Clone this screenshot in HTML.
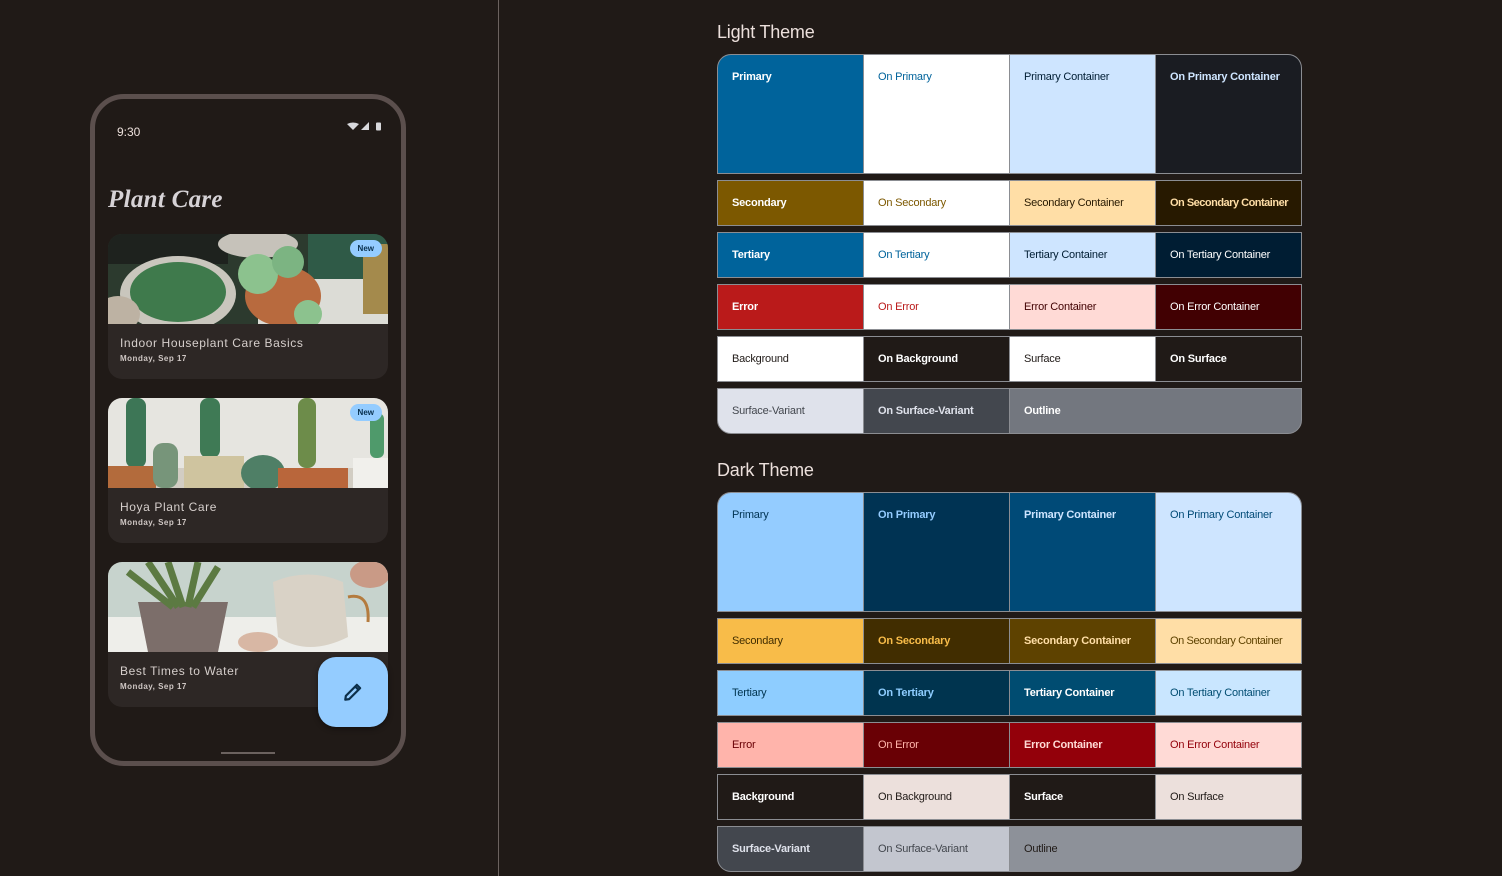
<!DOCTYPE html>
<html><head><meta charset="utf-8"><style>
*{box-sizing:border-box;margin:0;padding:0}
body{width:1502px;height:876px;background:#201a17;position:relative;overflow:hidden;font-family:"Liberation Sans",sans-serif}
.divider{position:absolute;left:498px;top:0;width:1px;height:876px;background:#6b625f}
.phone{position:absolute;left:90px;top:94px;width:316px;height:672px;border:5px solid #5b4f4d;border-radius:34px;background:#201a17}
.abs{position:absolute}
.card{position:absolute;left:13px;width:280px;height:145px;background:#2d2725;border-radius:14px;overflow:hidden}
.card .img{position:absolute;left:0;top:0;width:280px;height:90px}
.card .t{position:absolute;left:12px;top:102px;color:#d6cfcc;font-size:12px;letter-spacing:.6px}
.card .d{position:absolute;left:12px;top:120px;color:#cfc7c4;font-size:8px;font-weight:bold;letter-spacing:.5px}
.new{position:absolute;right:6px;top:6px;background:#94ccff;color:#08304d;font-size:8px;font-weight:bold;padding:4px 8px;border-radius:9px}
h2{position:absolute;left:717px;color:#ece0dc;font-size:18px;font-weight:normal;letter-spacing:-.2px}
.row{position:absolute;left:717px;width:585px;display:flex;border:1px solid #8b8d92;background:#8b8d92;gap:1px;overflow:hidden}
.row div{flex:0 0 145px;font-size:11px;padding-left:14px;display:flex;align-items:center;white-space:nowrap;letter-spacing:-.2px;overflow:hidden}
.row.big div{align-items:flex-start;padding-top:16px}
.row div.w{flex:1}
.b{font-weight:bold}
</style></head><body>
<div class="divider"></div>
<div class="phone">
  <div class="abs" style="left:22px;top:26px;color:#ece0dc;font-size:12px">9:30</div>
  <svg class="abs" style="left:252px;top:23px" width="38" height="12" viewBox="0 0 38 12">
    <path d="M0 2 Q6 -1 12 2 L6 8 Z" fill="#d8d8dc"/><path d="M14 8 L22 0 L22 8 Z" fill="#d8d8dc"/><rect x="29" y="0.5" width="5" height="8" rx="1" fill="#d8d8dc"/>
  </svg>
  <div class="abs" style="left:13px;top:87px;color:#d6d2d6;font-family:'Liberation Serif',serif;font-style:italic;font-weight:900;font-size:25px;letter-spacing:.3px">Plant Care</div>

  <div class="card" style="top:135px">
    <svg class="img" viewBox="0 0 280 90" preserveAspectRatio="none">
      <rect width="280" height="90" fill="#2c3a2e"/>
      <rect x="0" y="0" width="120" height="30" fill="#1e221e"/>
      <rect x="150" y="40" width="130" height="50" fill="#dcdcd6"/>
      <rect x="200" y="0" width="80" height="45" fill="#2f5a47"/>
      <rect x="255" y="10" width="25" height="70" fill="#a48a4c"/>
      <ellipse cx="70" cy="60" rx="58" ry="38" fill="#c9c6bd"/>
      <ellipse cx="70" cy="58" rx="48" ry="30" fill="#3f7a4c"/>
      <ellipse cx="150" cy="10" rx="40" ry="14" fill="#c6c2ba"/>
      <ellipse cx="175" cy="62" rx="38" ry="30" fill="#b86a3e"/>
      <circle cx="150" cy="40" r="20" fill="#8cc28e"/><circle cx="180" cy="28" r="16" fill="#7cb482"/><circle cx="200" cy="80" r="14" fill="#8cc28e"/>
      <ellipse cx="10" cy="80" rx="22" ry="18" fill="#bdb2a3"/>
    </svg>
    <div class="new">New</div>
    <div class="t">Indoor Houseplant Care Basics</div><div class="d">Monday, Sep 17</div>
  </div>

  <div class="card" style="top:299px">
    <svg class="img" viewBox="0 0 280 90" preserveAspectRatio="none">
      <rect width="280" height="90" fill="#e6e5e0"/>
      <rect x="0" y="70" width="280" height="20" fill="#d2cdc3"/>
      <rect x="18" y="0" width="20" height="70" rx="8" fill="#3d7656"/>
      <rect x="0" y="68" width="48" height="22" fill="#b36b3c"/>
      <rect x="45" y="45" width="25" height="45" rx="10" fill="#77957a"/>
      <rect x="92" y="0" width="20" height="60" rx="8" fill="#3f7a55"/>
      <rect x="76" y="58" width="60" height="32" fill="#cfc49f"/>
      <ellipse cx="155" cy="75" rx="22" ry="18" fill="#4f7f66"/>
      <rect x="190" y="0" width="18" height="70" rx="8" fill="#6d8c4a"/>
      <rect x="170" y="70" width="70" height="20" fill="#b9663b"/>
      <rect x="245" y="60" width="35" height="30" fill="#f1f0ec"/>
      <rect x="262" y="15" width="14" height="45" rx="6" fill="#4f9a6b"/>
    </svg>
    <div class="new">New</div>
    <div class="t">Hoya Plant Care</div><div class="d">Monday, Sep 17</div>
  </div>

  <div class="card" style="top:463px">
    <svg class="img" viewBox="0 0 280 90" preserveAspectRatio="none">
      <rect width="280" height="90" fill="#c7d3cd"/>
      <rect x="0" y="55" width="280" height="35" fill="#eeeeea"/>
      <path d="M30 40 L120 40 L110 90 L40 90 Z" fill="#7c6e6a"/>
      <path d="M40 0 L70 45 M60 0 L75 45 M90 0 L80 45 M110 5 L85 45 M20 10 L65 45" stroke="#5c7a42" stroke-width="7"/>
      <path d="M165 20 Q200 5 235 20 L240 75 Q200 95 170 75 Z" fill="#d9d2c6"/>
      <path d="M240 35 Q262 30 260 60" stroke="#b47b3e" stroke-width="3" fill="none"/>
      <ellipse cx="262" cy="12" rx="20" ry="14" fill="#c99a86"/>
      <ellipse cx="150" cy="80" rx="20" ry="10" fill="#d8b7a4"/>
    </svg>
    <div class="t">Best Times to Water</div><div class="d">Monday, Sep 17</div>
  </div>

  <div class="abs" style="left:223px;top:558px;width:70px;height:70px;background:#94ccff;border-radius:18px;box-shadow:0 2px 6px rgba(0,0,0,.4)">
    <svg class="abs" style="left:24px;top:24px" width="22" height="22" viewBox="0 0 20 20"><path d="M3 17 L3.5 13.5 L13.5 3.5 L16.5 6.5 L6.5 16.5 Z M12 5 L15 8" stroke="#0c2f4a" stroke-width="2" fill="none" stroke-linejoin="round"/></svg>
  </div>
  <div class="abs" style="left:126px;top:653px;width:54px;height:2px;background:#6b625f"></div>
</div>

<h2 style="top:22px">Light Theme</h2>
<div class="row big" style="top:54px;height:120px;border-radius:14px 14px 0 0">
  <div class="b" style="background:#00639b;color:#fff">Primary</div>
  <div style="background:#fff;color:#00639b">On Primary</div>
  <div style="background:#cee5ff;color:#001d33">Primary Container</div>
  <div class="w b" style="background:#1a1c22;color:#cee5ff">On Primary Container</div>
</div>
<div class="row" style="top:180px;height:46px">
  <div class="b" style="background:#7c5800;color:#fff">Secondary</div>
  <div style="background:#fff;color:#7c5800">On Secondary</div>
  <div style="background:#ffdea6;color:#271900">Secondary Container</div>
  <div class="w b" style="background:#271900;color:#ffdea6;letter-spacing:-.5px">On Secondary Container</div>
</div>
<div class="row" style="top:232px;height:46px">
  <div class="b" style="background:#00639b;color:#fff">Tertiary</div>
  <div style="background:#fff;color:#00639b">On Tertiary</div>
  <div style="background:#cee5ff;color:#001d33">Tertiary Container</div>
  <div class="w" style="background:#001d33;color:#fff">On Tertiary Container</div>
</div>
<div class="row" style="top:284px;height:46px">
  <div class="b" style="background:#ba1a1a;color:#fff">Error</div>
  <div style="background:#fff;color:#ba1a1a">On Error</div>
  <div style="background:#ffdad6;color:#410002">Error Container</div>
  <div class="w" style="background:#410002;color:#fff">On Error Container</div>
</div>
<div class="row" style="top:336px;height:46px">
  <div style="background:#fff;color:#201a17">Background</div>
  <div class="b" style="background:#201a17;color:#fff">On Background</div>
  <div style="background:#fff;color:#201a17">Surface</div>
  <div class="w b" style="background:#201a17;color:#fff">On Surface</div>
</div>
<div class="row" style="top:388px;height:46px;border-radius:0 0 14px 14px">
  <div style="background:#dfe2eb;color:#43474e">Surface-Variant</div>
  <div class="b" style="background:#43474e;color:#dfe2eb">On Surface-Variant</div>
  <div class="w b" style="background:#73777f;color:#fff">Outline</div>
</div>

<h2 style="top:460px">Dark Theme</h2>
<div class="row big" style="top:492px;height:120px;border-radius:14px 14px 0 0">
  <div style="background:#94ccff;color:#003353">Primary</div>
  <div class="b" style="background:#003353;color:#94ccff">On Primary</div>
  <div class="b" style="background:#004a77;color:#cee5ff">Primary Container</div>
  <div class="w" style="background:#cee5ff;color:#004a77">On Primary Container</div>
</div>
<div class="row" style="top:618px;height:46px">
  <div style="background:#f8bc49;color:#412d00">Secondary</div>
  <div class="b" style="background:#412d00;color:#f8bc49">On Secondary</div>
  <div class="b" style="background:#5e4200;color:#ffdea6">Secondary Container</div>
  <div class="w" style="background:#ffdea6;color:#5e4200;letter-spacing:-.4px">On Secondary Container</div>
</div>
<div class="row" style="top:670px;height:46px">
  <div style="background:#8ecdff;color:#00344f">Tertiary</div>
  <div class="b" style="background:#00344f;color:#8ecdff">On Tertiary</div>
  <div class="b" style="background:#004c71;color:#fff">Tertiary Container</div>
  <div class="w" style="background:#c9e6ff;color:#004c71">On Tertiary Container</div>
</div>
<div class="row" style="top:722px;height:46px">
  <div style="background:#ffb4ab;color:#690005">Error</div>
  <div style="background:#690005;color:#ffb4ab">On Error</div>
  <div class="b" style="background:#93000a;color:#ffdad6">Error Container</div>
  <div class="w" style="background:#ffdad6;color:#93000a">On Error Container</div>
</div>
<div class="row" style="top:774px;height:46px">
  <div class="b" style="background:#201a17;color:#fff">Background</div>
  <div style="background:#ece0dc;color:#201a17">On Background</div>
  <div class="b" style="background:#201a17;color:#fff">Surface</div>
  <div class="w" style="background:#ece0dc;color:#201a17">On Surface</div>
</div>
<div class="row" style="top:826px;height:46px;border-radius:0 0 14px 14px">
  <div class="b" style="background:#43474e;color:#dfe2eb">Surface-Variant</div>
  <div style="background:#c3c6cf;color:#43474e">On Surface-Variant</div>
  <div class="w" style="background:#8d9199;color:#201a17">Outline</div>
</div>
</body></html>
